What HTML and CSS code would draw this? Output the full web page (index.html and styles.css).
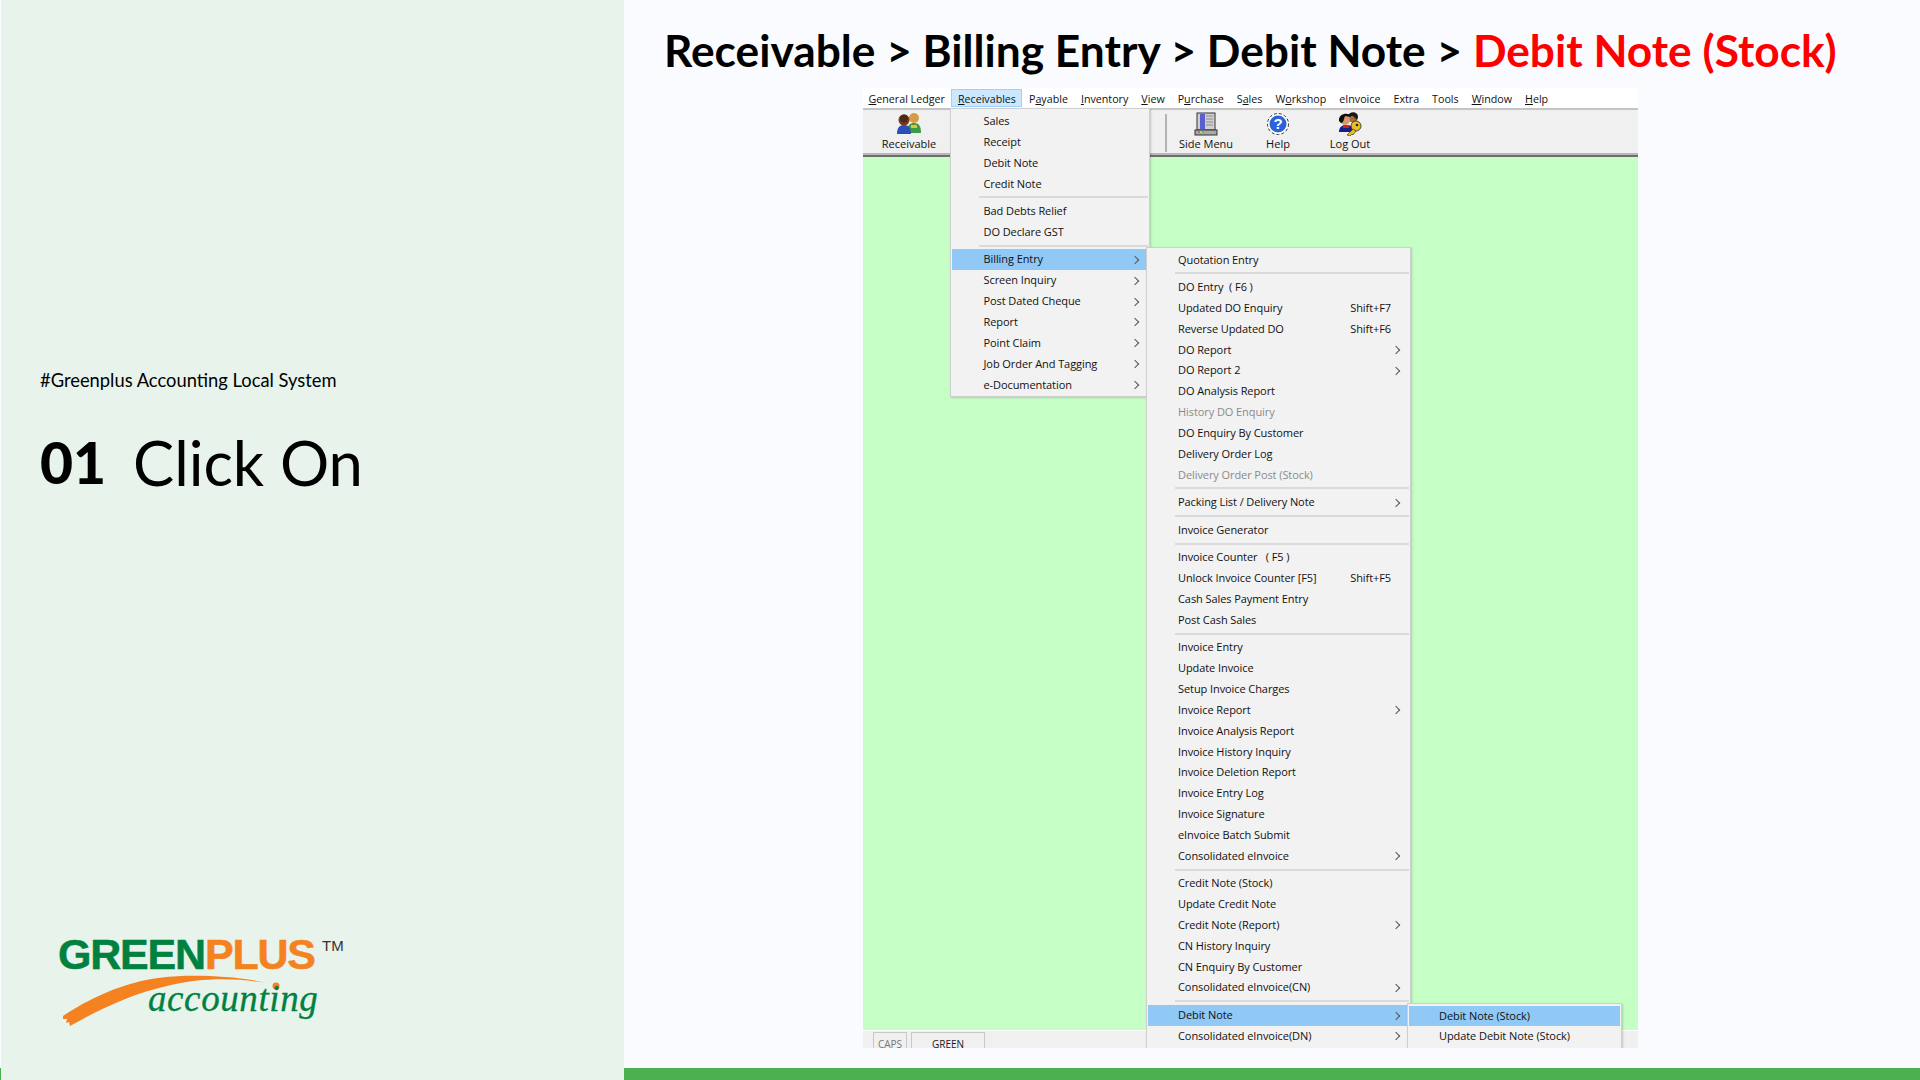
FILE: index.html
```html
<!DOCTYPE html>
<html lang="en">
<head>
<meta charset="utf-8">
<title>Receivable &gt; Billing Entry &gt; Debit Note &gt; Debit Note (Stock)</title>
<link rel="stylesheet" href="styles.css">
</head>
<body>
<aside class="panel">
  <p class="tag">#Greenplus Accounting Local System</p>
  <h2 class="step"><b>01</b><span>Click On</span></h2>
  <div class="logo">
    <div class="logo-name"><span class="g">GREEN</span><span class="o">PLUS</span></div>
    <span class="logo-tm">TM</span>
    <svg class="logo-swoosh" width="240" height="60" viewBox="0 -1 240 60">
      <path d="M1 41 C25 25 60 7 100 2.5 C125 -.5 170 0 205 8 C175 3 140 2 105 11 C70 19 40 33 8 51 L7 47 L4 48 L5 44 L1 44 Z" fill="#f58220"/>
      <circle cx="214" cy="11" r="3.5" fill="#f58220"/>
    </svg>
    <div class="logo-sub">accounting</div>
  </div>
</aside>
<main class="main">
  <h1 class="title">Receivable &gt; Billing Entry &gt; Debit Note &gt; <em>Debit Note (Stock)</em></h1>
  <section class="app">
    <nav class="menubar">
      <a><u>G</u>eneral Ledger</a>
      <a class="open"><u>R</u>eceivables</a>
      <a>P<u>a</u>yable</a>
      <a><u>I</u>nventory</a>
      <a><u>V</u>iew</a>
      <a>P<u>u</u>rchase</a>
      <a>S<u>a</u>les</a>
      <a>W<u>o</u>rkshop</a>
      <a>eInvoice</a>
      <a>Extra</a>
      <a>Tools</a>
      <a><u>W</u>indow</a>
      <a><u>H</u>elp</a>
    </nav>
    <div class="toolbar">
      <div class="tool">
        <svg width="26" height="24" viewBox="0 0 26 24">
          <circle cx="18" cy="6" r="5" fill="#d99a45"/><path d="M11 21 C11 13 14 11 18 11 C23 11 25 14 25 21 Z" fill="#3f9a48"/>
          <rect x="15" y="13" width="6" height="3" fill="#e8c23a"/>
          <circle cx="8" cy="8" r="5.5" fill="#7a3a1c"/><circle cx="8" cy="6.5" r="4" fill="#4b2a1c"/>
          <path d="M1 22 C1 15 4 13 8 13 C12 13 15 15 15 22 Z" fill="#2a50b8"/>
        </svg>
        <span>Receivable</span>
      </div>
      <i class="tool-sep"></i>
      <div class="tool">
        <svg width="24" height="24" viewBox="0 0 24 24">
          <rect x="3" y="1" width="18" height="17" fill="#cfcfcf" stroke="#333"/>
          <rect x="6" y="2" width="5" height="15" fill="#5a5fd0"/>
          <path d="M12 4h7M12 7h7M12 10h7M12 13h7" stroke="#8d8d8d"/>
          <rect x="1" y="18" width="22" height="5" fill="#a9a9a9" stroke="#333"/>
          <path d="M4 20h2" stroke="#e33"/><path d="M6 20h2" stroke="#ee3"/><path d="M8 20h2" stroke="#3c3"/>
        </svg>
        <span>Side Menu</span>
      </div>
      <div class="tool">
        <svg width="24" height="24" viewBox="0 0 24 24">
          <circle cx="12" cy="12" r="10.5" fill="#fff" stroke="#333" stroke-dasharray="3 2"/>
          <circle cx="12" cy="12" r="8.5" fill="#2a62d8"/>
          <text class="help-q" x="12" y="17" text-anchor="middle">?</text>
        </svg>
        <span>Help</span>
      </div>
      <div class="tool">
        <svg width="24" height="24" viewBox="0 0 24 24">
          <circle cx="15" cy="6" r="4.5" fill="#a86a3c"/><path d="M10 4 C11 -1 20 -1 20 5 L19 8 L15 4 Z" fill="#1a1a1a"/>
          <circle cx="7" cy="8" r="5" fill="#d89868"/><path d="M1 9 C0 0 13 0 13 5 L7 4 L5 10 L3 11 Z" fill="#0c0c0c"/>
          <path d="M1 20 C1 14 5 13 9 13 C13 13 15 15 15 20 Z" fill="#14208a"/>
          <rect x="5" y="13" width="6" height="3" fill="#d02020"/>
          <circle cx="18" cy="14" r="5" fill="#e8c020" stroke="#222" stroke-width=".8"/>
          <circle cx="19" cy="13" r="1.3" fill="#222"/>
          <path d="M15 17 L9 23 L12 24 L14 22 L15 23 L18 19 Z" fill="#e8c020" stroke="#222" stroke-width=".6"/>
        </svg>
        <span>Log Out</span>
      </div>
    </div>
    <div class="canvas"></div>
    <footer class="statusbar">
      <span class="cell caps">CAPS</span>
      <span class="cell green">GREEN</span>
    </footer>

    <div class="menu menu-a">
      <div class="row">Sales</div>
      <div class="row">Receipt</div>
      <div class="row">Debit Note</div>
      <div class="row">Credit Note</div>
      <hr>
      <div class="row">Bad Debts Relief</div>
      <div class="row">DO Declare GST</div>
      <hr>
      <div class="row sub active">Billing Entry</div>
      <div class="row sub">Screen Inquiry</div>
      <div class="row sub">Post Dated Cheque</div>
      <div class="row sub">Report</div>
      <div class="row sub">Point Claim</div>
      <div class="row sub">Job Order And Tagging</div>
      <div class="row sub">e-Documentation</div>
    </div>

    <div class="menu menu-b">
      <div class="row">Quotation Entry</div>
      <hr>
      <div class="row">DO Entry&nbsp; ( F6 )</div>
      <div class="row">Updated DO Enquiry<kbd>Shift+F7</kbd></div>
      <div class="row">Reverse Updated DO<kbd>Shift+F6</kbd></div>
      <div class="row sub">DO Report</div>
      <div class="row sub">DO Report 2</div>
      <div class="row">DO Analysis Report</div>
      <div class="row off">History DO Enquiry</div>
      <div class="row">DO Enquiry By Customer</div>
      <div class="row">Delivery Order Log</div>
      <div class="row off">Delivery Order Post (Stock)</div>
      <hr>
      <div class="row sub">Packing List / Delivery Note</div>
      <hr>
      <div class="row">Invoice Generator</div>
      <hr>
      <div class="row">Invoice Counter &nbsp;&nbsp;( F5 )</div>
      <div class="row">Unlock Invoice Counter [F5]<kbd>Shift+F5</kbd></div>
      <div class="row">Cash Sales Payment Entry</div>
      <div class="row">Post Cash Sales</div>
      <hr>
      <div class="row">Invoice Entry</div>
      <div class="row">Update Invoice</div>
      <div class="row">Setup Invoice Charges</div>
      <div class="row sub">Invoice Report</div>
      <div class="row">Invoice Analysis Report</div>
      <div class="row">Invoice History Inquiry</div>
      <div class="row">Invoice Deletion Report</div>
      <div class="row">Invoice Entry Log</div>
      <div class="row">Invoice Signature</div>
      <div class="row">eInvoice Batch Submit</div>
      <div class="row sub">Consolidated eInvoice</div>
      <hr>
      <div class="row">Credit Note (Stock)</div>
      <div class="row">Update Credit Note</div>
      <div class="row sub">Credit Note (Report)</div>
      <div class="row">CN History Inquiry</div>
      <div class="row">CN Enquiry By Customer</div>
      <div class="row sub">Consolidated eInvoice(CN)</div>
      <hr>
      <div class="row sub active">Debit Note</div>
      <div class="row sub">Consolidated eInvoice(DN)</div>
    </div>

    <div class="menu menu-c">
      <div class="row active">Debit Note (Stock)</div>
      <div class="row">Update Debit Note (Stock)</div>
    </div>
  </section>
</main>
<div class="bar"></div>
</body>
</html>
```
FILE: styles.css
```css
* { box-sizing: border-box; }
html, body { margin: 0; height: 100%; }
body {
  width: 1920px; height: 1080px; overflow: hidden;
  display: grid;
  grid-template-columns: 1px 623px 1fr;
  grid-template-rows: 1068px 12px;
  background: #f9fbff;
  font-family: "Lato", "Liberation Sans", sans-serif;
  color: #000;
}
.bar { grid-column: 1 / 4; grid-row: 2; background: #4caf50; }

/* left panel */
.panel {
  grid-column: 2; grid-row: 1 / 3; z-index: 1;
  background: #e8f3ec;
  padding: 366px 0 0 39px;
  display: flex; flex-direction: column;
}
.tag { margin: 0; font-size: 18.35px; line-height: 28px; }
.step { margin: 33px 0 0; font-size: 61.6px; line-height: 70px; font-weight: 400; display: flex; }
.step b { width: 93px; font-weight: 900; font-size: 57px; }
.logo { position: relative; margin: 432px 0 0 18px; width: 290px; height: 110px; }
.logo-name {
  position: absolute; left: 0; top: 0;
  font: 700 43px/50px "Liberation Sans", sans-serif; letter-spacing: -1.2px;
  -webkit-text-stroke: .5px currentColor;
}
.logo-name .g { color: #00813f; }
.logo-name .o { color: #f58220; }
.logo-tm { position: absolute; left: 264px; top: 8px; font: 400 15px/18px "Liberation Sans", sans-serif; color: #333; }
.logo-swoosh { position: absolute; left: 4px; top: 45px; }
.logo-sub {
  position: absolute; left: 90px; top: 45px;
  font: italic 400 37px/50px "Liberation Serif", serif; color: #00813f; letter-spacing: .6px;
  -webkit-text-stroke: .3px currentColor;
}

/* main */
.main { grid-column: 3; grid-row: 1; min-width: 0; padding: 0 0 0 39px; }
.title { margin: 0 0 0 1px; padding-top: 24px; height: 88px; font-size: 44.25px; line-height: 52px; font-weight: 700; white-space: nowrap; }
.title em { font-style: normal; color: #f00; }

.app {
  position: relative; overflow: hidden;
  margin-left: 200px; width: 775px; height: 960px;
  display: flex; flex-direction: column;
  font-family: "Open Sans", sans-serif; font-size: 11px; color: #111;
}
.menubar { height: 20px; background: #fff; display: flex; align-items: center; flex: none; font-size: 10.7px; }
.menubar a { height: 18px; line-height: 18px; padding: 0 5.5px; white-space: nowrap; border: 1px solid transparent; }
.menubar a:first-child { padding-left: 4.5px; }
.menubar .open { background: #cce8ff; border-color: #99d1ff; }

.toolbar {
  flex: none; height: 49px; background: #f0f0f0;
  border-top: 2px solid #c4c4c4;
  border-bottom: 2px solid #6f6f6f;
  box-shadow: inset 0 -2px #b8b8b8;
  display: flex; padding: 2px 0 0 10px;
}
.tool { width: 72px; display: flex; flex-direction: column; align-items: center; justify-content: flex-start; }
.tool svg { display: block; }
.tool span { line-height: 16px; }
.tool-sep { width: 2px; height: 38px; margin: 2px 3px 0 220px; background: #b4b4b4; }
.help-q { font: 700 15px "Liberation Sans", sans-serif; fill: #fff; }

.canvas { flex: 1; background: #c6ffc6; }
.statusbar { flex: none; height: 18px; background: #f0f0f0; border-top: 1px solid #fff; display: flex; gap: 4px; padding: 1px 0 0 10px; }
.cell { display: block; height: 20px; border: 1px solid #c8c8c8; text-align: center; line-height: 22px; font-size: 10px; }
.caps { width: 34px; color: #777; }
.green { width: 74px; color: #1a1a1a; }

/* menus */
.menu {
  position: absolute; background: #f2f2f2;
  border: 1px solid #cfcfcf; box-shadow: 1px 1px 2px rgba(0,0,0,.18);
  padding: 2px 1px;
  letter-spacing: -.08px;
}
.menu-a { left: 87px; top: 20px; width: 200px; z-index: 2; height: 289px; padding-top: 2px; }
.menu-a .row { padding-left: 31.5px; }
.menu-b { left: 283px; top: 159px; width: 265px; z-index: 3; height: 860px; padding-top: 1.5px; }
.menu-c { left: 544px; top: 915px; width: 215px; z-index: 4; height: 100px; padding-top: 1.5px; }
.row {
  position: relative; height: 20.85px; line-height: 20.85px;
  padding: 0 18px 0 30px; white-space: nowrap;
  display: flex; justify-content: space-between;
}
.row.active { background: #90c8f6; }
.row.off { color: #8a8a8a; }
.row kbd { font: inherit; }
.row.sub::after {
  content: ""; position: absolute; right: 10px; top: 7.5px;
  width: 5px; height: 5px;
  border-top: 1px solid #555; border-right: 1px solid #555;
  transform: rotate(45deg);
}
.menu hr { border: 0; height: 6.7px; margin: 0 0 0 27px; position: relative; }
.menu hr::before { content: ""; display: block; position: relative; top: 2px; height: 2px; background: #dadada; }
```
